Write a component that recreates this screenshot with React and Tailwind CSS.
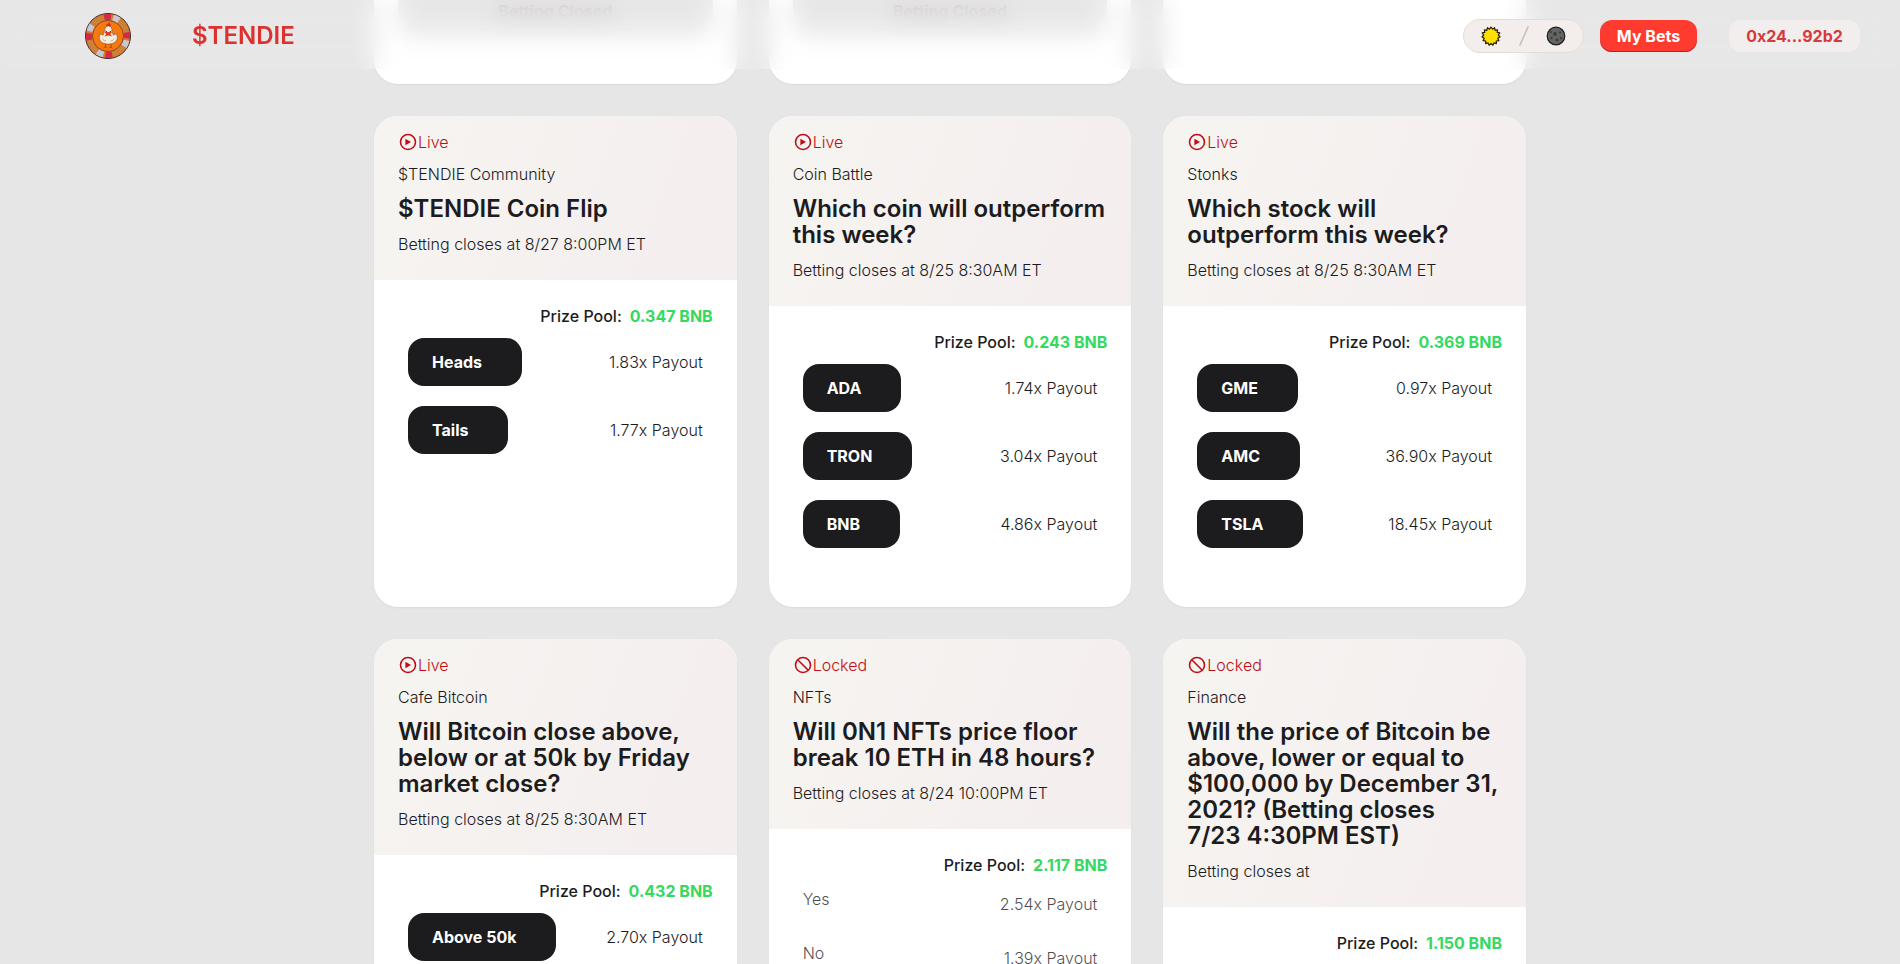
import React from 'react';

const markets = [
  {
    status: 'live',
    category: '$TENDIE Community',
    title: '$TENDIE Coin Flip',
    closes: '8/27 8:00PM ET',
    pool: '0.347 BNB',
    options: [
      { name: 'Heads', payout: '1.83x' },
      { name: 'Tails', payout: '1.77x' },
    ],
  },
  {
    status: 'live',
    category: 'Coin Battle',
    title: 'Which coin will outperform this week?',
    closes: '8/25 8:30AM ET',
    pool: '0.243 BNB',
    options: [
      { name: 'ADA', payout: '1.74x' },
      { name: 'TRON', payout: '3.04x' },
      { name: 'BNB', payout: '4.86x' },
    ],
  },
  {
    status: 'live',
    category: 'Stonks',
    title: 'Which stock will outperform this week?',
    closes: '8/25 8:30AM ET',
    pool: '0.369 BNB',
    options: [
      { name: 'GME', payout: '0.97x' },
      { name: 'AMC', payout: '36.90x' },
      { name: 'TSLA', payout: '18.45x' },
    ],
  },
  {
    status: 'live',
    category: 'Cafe Bitcoin',
    title: 'Will Bitcoin close above, below or at 50k by Friday market close?',
    closes: '8/25 8:30AM ET',
    pool: '0.432 BNB',
    options: [{ name: 'Above 50k', payout: '2.70x' }],
  },
  {
    status: 'locked',
    category: 'NFTs',
    title: 'Will 0N1 NFTs price floor break 10 ETH in 48 hours?',
    closes: '8/24 10:00PM ET',
    pool: '2.117 BNB',
    options: [
      { name: 'Yes', payout: '2.54x' },
      { name: 'No', payout: '1.39x' },
    ],
  },
  {
    status: 'locked',
    category: 'Finance',
    title: 'Will the price of Bitcoin be above, lower or equal to $100,000 by December 31, 2021? (Betting closes 7/23\u00a04:30PM EST)',
    closes: '',
    pool: '1.150 BNB',
    options: [],
  },
];

const LiveIcon = () => (
  <svg viewBox="0 0 20 20" className="h-5 w-5" fill="none" aria-hidden="true">
    <circle cx="10" cy="10" r="7.5" stroke="currentColor" strokeWidth="1.6" />
    <path d="M7.4 6.7v6.6l5.600-3.300z" fill="currentColor" />
  </svg>
);

const LockedIcon = () => (
  <svg viewBox="0 0 20 20" className="h-5 w-5" fill="none" stroke="currentColor" strokeWidth="1.6" aria-hidden="true">
    <circle cx="10" cy="10" r="7.5" />
    <path d="M4.7 4.7l10.6 10.6" />
  </svg>
);

// Poker chip with the chicken in the middle
const Logo = () => (
  <svg viewBox="0 0 46 46" className="h-[46px] w-[46px]" aria-hidden="true">
    <circle cx="23" cy="23" r="22.5" fill="#cf8038" stroke="#3c2a24" />
    <g fill="none" strokeWidth="6">
      <circle cx="23" cy="23" r="19" stroke="#d42a48" strokeDasharray="7 22.85" strokeDashoffset="-26.3" transform="rotate(-3 23 23)" />
      <circle cx="23" cy="23" r="19" stroke="#c9c8d2" strokeDasharray="6.5 23.35" strokeDashoffset="-4.5" />
    </g>
    <circle cx="23" cy="23" r="15.5" fill="#f5790f" stroke="#8d4a24" />
    <path d="M21.400 13.500c-.8-2 .5-3 1.400-2.400.2-2.300 2.200-2.200 2.100-.1 1.500-.1 1.200 1.700.5 2.800z" fill="#d92c1b" />
    <path
      d="M23.300 13c2.800 0 3.700 2.600 4 5.500.3 1.800.6 3 1.300 3.700 1.200-.8 2.300-1.300 3.200-1-.1 1.400.8 2.600.4 4.500-.9 3.800-4.700 5.300-8.900 5.300s-8.200-1.600-8.900-5.300c-.2-1.900.3-3.100.2-4.500 1.200-.1 2.600.3 3.400 1 .7-.7 1-1.900 1.300-3.700.4-3 1.400-5.500 4-5.500z"
      fill="#f7eee2"
      stroke="#7c4c2e"
      strokeWidth=".6"
    />
    <path d="M20.300 18l1.800.8M26.500 18l-1.800.8" stroke="#4a2a1c" strokeWidth=".9" />
    <path d="M23.300 19l3.700 0-1.600 2.200 1.800 2.400-3.900-1.100-3.900 1.100 1.800-2.400-1.600-2.200z" fill="#df3f18" />
    <path d="M17.500 25.500c.7 1.800 2 2.500 3.500 2.500M29 25.500c-.7 1.800-2 2.500-3.500 2.500" fill="none" stroke="#b79577" strokeWidth=".8" />
    <path d="M20.500 31v3m-2 1l2-1 1.500 1M26 31v3m-2 1l2-1 1.500 1" fill="none" stroke="#a84d14" strokeWidth="1" />
  </svg>
);

const SunIcon = () => (
  <svg viewBox="0 0 20 20" className="h-5 w-5" aria-hidden="true">
    <path
      d="M10 1l1.500 2.200L13.600 1.700l.5 2.600 2.500-.5-.4 2.600 2.600.5-1.500 2.100L19 11l-2.300 1.300 1.200 2.300-2.600.4.100 2.600-2.500-.7-1 2.300L10 17.500 8.100 19.200l-1-2.300-2.500.7.100-2.600-2.600-.4 1.200-2.300L1 11l1.700-2L1.200 6.900l2.600-.5-.4-2.600 2.500.5.500-2.600 2.100 1.500z"
      fill="#ffe000"
      stroke="#2b2200"
      strokeWidth="1.200"
      strokeLinejoin="round"
    />
  </svg>
);

const MoonIcon = () => (
  <svg viewBox="0 0 20 20" className="h-5 w-5" aria-hidden="true">
    <circle cx="10" cy="10" r="8.800" fill="#646464" stroke="#1b1b1b" strokeWidth="1.200" />
    <g fill="#3d3d3d">
      <circle cx="9" cy="8" r="1.900" />
      <circle cx="14" cy="6.500" r="1.100" />
      <circle cx="5" cy="6" r="1" />
      <circle cx="5.500" cy="12" r="1.300" />
      <circle cx="11" cy="14" r="1.600" />
      <circle cx="15" cy="12" r="1.200" />
    </g>
  </svg>
);

const Header = () => (
  <header className="fixed inset-x-0 top-0 z-10 flex h-[69px] items-center justify-between bg-white/5 pt-0.5 pr-10 pl-[85px] backdrop-blur-md">
    <a href="#home" className="flex items-center gap-[61px] text-2xl font-semibold text-[#dc322f]">
      <Logo />
      $TENDIE
    </a>
    <div className="flex items-center">
      <div className="mr-4 flex h-[34px] w-[121px] items-center justify-between rounded-full border border-[#e8ddd2] bg-[#f3eeeb] px-[17px]">
        <button type="button" aria-label="Light theme">
          <SunIcon />
        </button>
        <svg viewBox="0 0 10 20" className="h-5 w-[10px]" aria-hidden="true">
          <path d="M9 1L1 19" stroke="#c9c3c3" strokeWidth="1.800" strokeLinecap="round" />
        </svg>
        <button type="button" aria-label="Dark theme">
          <MoonIcon />
        </button>
      </div>
      <button type="button" className="mr-8 h-8 w-[97px] rounded-xl bg-[#ff3a2f] font-bold text-white shadow-[inset_0_-1px_0_#b5202a]">
        My Bets
      </button>
      <button type="button" className="h-8 w-[131px] rounded-xl bg-[#f3eeee] font-bold text-[#d63a3a]">
        0x24...92b2
      </button>
    </div>
  </header>
);

const Option = ({ option, locked }) => {
  if (locked) {
    return (
      <li className="flex min-h-[54px] items-center justify-between p-[10px] text-[#1c1c1e]/80">
        <span className="self-start">{option.name}</span>
        <span>{option.payout} Payout</span>
      </li>
    );
  }
  return (
    <li className="flex items-center justify-between p-[10px]">
      <button type="button" className="h-12 rounded-2xl bg-[#1c1c1e] pr-10 pl-6 font-bold text-white">
        {option.name}
      </button>
      <span>{option.payout} Payout</span>
    </li>
  );
};

const MarketCard = ({ market }) => {
  const locked = market.status === 'locked';
  return (
    <article className="overflow-hidden rounded-3xl bg-white shadow-xs">
      <div className="bg-linear-110 from-[#f6f4f1] to-[#f4eeee] pt-[14px] pr-5 pb-6 pl-6">
        <p className="mb-2 flex items-center text-[#c00d16]">
          {locked ? <LockedIcon /> : <LiveIcon />}
          {locked ? 'Locked' : 'Live'}
        </p>
        <p>{market.category}</p>
        <h2 className="my-[10px] text-2xl leading-[26px] font-semibold">{market.title}</h2>
        <p>Betting closes at {market.closes}</p>
      </div>
      <div className="px-6 pt-6 pb-[49px]">
        <p className="flex justify-end gap-2 font-medium">
          Prize Pool: <span className="font-bold text-[#35d95f]">{market.pool}</span>
        </p>
        <ul>
          {market.options.map((option) => (
            <Option key={option.name} option={option} locked={locked} />
          ))}
        </ul>
      </div>
    </article>
  );
};

// Tail end of the closed markets, scrolled away under the header
const ClosedCard = ({ label }) => (
  <article className="flex h-60 flex-col justify-end rounded-3xl bg-white px-6 pb-[49px] shadow-xs">
    {label && (
      <button type="button" disabled className="h-12 rounded-2xl bg-[#e6e6e6] font-bold text-[#c9bfc1]">
        {label}
      </button>
    )}
  </article>
);

const App = () => (
  <div className="h-screen overflow-hidden bg-[#e6e6e6] font-['Inter',sans-serif] text-base font-light text-[#1c1c1e]">
    <Header />
    <main className="mx-auto max-w-6xl">
      <div className="flex h-[84px] items-end">
        <div className="grid w-full grid-cols-3 gap-8">
          <ClosedCard label="Betting Closed" />
          <ClosedCard label="Betting Closed" />
          <ClosedCard />
        </div>
      </div>
      <div className="grid grid-cols-3 gap-8 pt-8">
        {markets.map((market) => (
          <MarketCard key={market.title} market={market} />
        ))}
      </div>
    </main>
  </div>
);

export default App;
